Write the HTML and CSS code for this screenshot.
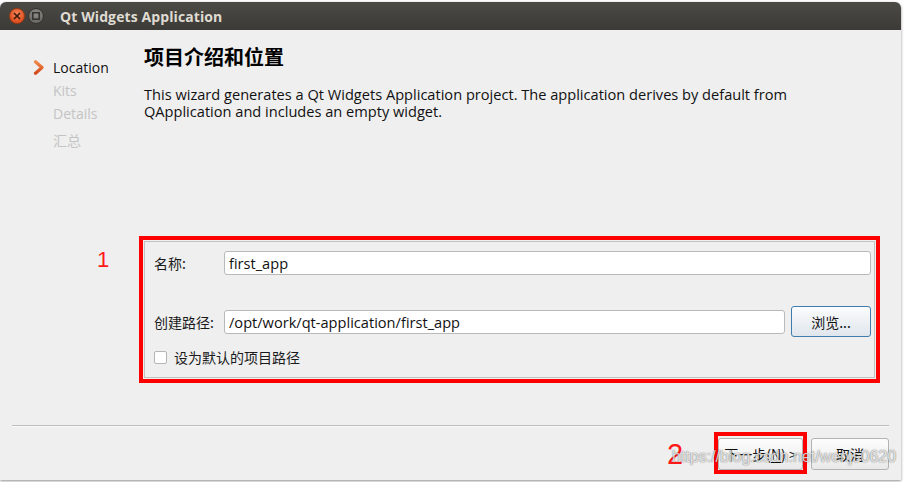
FILE: index.html
```html
<!DOCTYPE html>
<html lang="zh-CN">
<head>
  <meta charset="UTF-8">
  <title>Qt Widgets Application</title>
  <link rel="stylesheet" href="styles.css">
</head>
<body>
  <div class="window">
    <div class="titlebar">
      <span class="wbtn close-btn">
        <svg width="8" height="8" viewBox="0 0 8 8"><path d="M1 1 L7 7 M7 1 L1 7" stroke="#3a1a0c" stroke-width="1.6"/></svg>
      </span>
      <span class="wbtn max-btn">
        <svg width="8" height="8" viewBox="0 0 8 8"><rect x="0.8" y="0.8" width="6.4" height="6.4" fill="none" stroke="#2e2d2a" stroke-width="1.4"/></svg>
      </span>
      <span class="title">Qt Widgets Application</span>
    </div>

    <div class="main">
      <ul class="steps">
        <li class="active">
          <svg class="step-arrow" width="12" height="15" viewBox="0 0 12 15">
            <defs>
              <linearGradient id="ag" x1="0" y1="0" x2="0" y2="1">
                <stop offset="0" stop-color="#f08a4a"/>
                <stop offset="1" stop-color="#d4481a"/>
              </linearGradient>
            </defs>
            <path d="M2.5 1.8 L9 7.5 L2.5 13.2" fill="none" stroke="url(#ag)" stroke-width="3.2" stroke-linecap="round" stroke-linejoin="round"/>
          </svg>
          Location
        </li>
        <li>Kits</li>
        <li>Details</li>
        <li class="cjk">汇总</li>
      </ul>

      <div class="page">
        <h1>项目介绍和位置</h1>
        <p class="desc">This wizard generates a Qt Widgets Application project. The application derives by default from QApplication and includes an empty widget.</p>

        <div class="group marked">
          <span class="mark mark-1">1</span>
          <label class="field-label row-name">名称:</label>
          <div class="input wide row-name">first_app</div>

          <label class="field-label row-path">创建路径:</label>
          <div class="input row-path">/opt/work/qt-application/first_app</div>
          <button class="btn browse-btn row-path">浏览...</button>

          <label class="check-row">
            <span class="checkbox"></span>
            设为默认的项目路径
          </label>
        </div>
      </div>
    </div>

    <div class="footer">
      <span class="mark mark-2">2</span>
      <span class="annot"><button class="btn next-btn">下一步(<u>N</u>) &gt;</button></span>
      <button class="btn">取消</button>
    </div>

    <div class="watermark">https://blog.csdn.net/wenjs0620</div>
  </div>
</body>
</html>
```

FILE: styles.css
```css
* {
  box-sizing: border-box;
  margin: 0;
  padding: 0;
}

body {
  background: #ffffff;
  font-family: 'Open Sans', 'Noto Sans CJK SC', sans-serif;
  font-size: 14px;
  color: #1a1a1a;
  width: 904px;
  height: 482px;
  overflow: hidden;
}

.window {
  position: relative;
  width: 901px;
  height: 478px;
  margin-top: 2px;
  background: #efefef;
  border-radius: 6px 6px 0 0;
  box-shadow: 0 1px 3px rgba(0, 0, 0, 0.45);
  display: flex;
  flex-direction: column;
}

.titlebar {
  height: 28px;
  flex-shrink: 0;
  background: linear-gradient(#4c4a45, #3b3a36);
  border-radius: 6px 6px 0 0;
  display: flex;
  align-items: center;
  padding-left: 9px;
}

.wbtn {
  width: 16px;
  height: 16px;
  border-radius: 50%;
  display: flex;
  align-items: center;
  justify-content: center;
  margin-right: 3px;
}

.close-btn {
  background: radial-gradient(circle at 50% 35%, #f3845a, #e0501f 70%);
  border: 1px solid #9c3a14;
}

.max-btn {
  background: radial-gradient(circle at 50% 35%, #8f8d88, #6b6a65 70%);
  border: 1px solid #353430;
}

.title {
  margin-left: 13px;
  font-family: 'Open Sans', sans-serif;
  font-weight: 700;
  font-size: 14px;
  color: #dfdbd2;
  letter-spacing: 0.1px;
}

.main {
  flex: 1;
  display: flex;
}

.steps {
  list-style: none;
  width: 144px;
  flex-shrink: 0;
  padding: 28px 0 0 53px;
}

.steps li {
  position: relative;
  height: 23px;
  line-height: 20px;
  color: #c4c4c4;
  font-size: 14px;
}

.steps li.active {
  color: #111111;
}

.steps li.cjk {
  margin-top: 4px;
}

.step-arrow {
  position: absolute;
  left: -20px;
  top: 2px;
}

.page {
  flex: 1;
  display: flex;
  flex-direction: column;
  padding: 13px 26px 47px 0;
}

h1 {
  font-family: 'Noto Sans CJK SC', sans-serif;
  font-size: 20px;
  font-weight: 700;
  line-height: 28px;
  color: #000000;
}

.desc {
  margin-top: 15px;
  font-size: 14.6px;
  line-height: 17px;
  color: #111111;
  width: 700px;
}

.group {
  margin-top: auto;
  position: relative;
  height: 137px;
  border: 1px solid #c2c2c2;
  padding: 9px 3px 0 9px;
  display: grid;
  grid-template-columns: 64px 1fr auto;
  grid-template-rows: 24px 31px 31px 11px 18px;
  column-gap: 6px;
  align-items: center;
}

.row-name {
  grid-row: 1;
}

.row-path {
  grid-row: 3;
}

.marked {
  outline: 4px solid #ff0000;
  outline-offset: 1px;
}

.mark {
  position: absolute;
  font-family: 'Liberation Sans', sans-serif;
  color: #ff1a1a;
  line-height: 1;
}

.mark-1 {
  left: -48px;
  top: 7px;
  font-size: 22px;
}

.mark-2 {
  left: 655px;
  top: 14px;
  font-size: 29px;
}

.field-label {
  font-family: 'Noto Sans CJK SC', sans-serif;
  font-size: 14px;
  color: #1a1a1a;
  white-space: nowrap;
}

.input {
  height: 24px;
  background: #ffffff;
  border: 1px solid #b9b9b9;
  border-radius: 3px;
  padding: 0 4px;
  line-height: 22px;
  font-size: 14.6px;
  color: #111111;
}

.input.wide {
  grid-column: 2 / 4;
}

.btn {
  height: 32px;
  background: linear-gradient(#fdfdfd, #e9e9e9);
  border: 1px solid #b3b3b3;
  border-radius: 3px;
  font-family: 'Noto Sans CJK SC', sans-serif;
  font-size: 14px;
  color: #111111;
}

.browse-btn {
  width: 80px;
  height: 31px;
  background: linear-gradient(#fbfcfd, #dfe6ec);
  border-color: #3f7bab;
}

.check-row {
  grid-row: 5;
  grid-column: 1 / 4;
  display: flex;
  align-items: center;
  gap: 7px;
  font-family: 'Noto Sans CJK SC', sans-serif;
  font-size: 14px;
}

.checkbox {
  width: 13px;
  height: 13px;
  background: #ffffff;
  border: 1px solid #b5b5b5;
  border-radius: 2px;
}

.footer {
  position: relative;
  height: 55px;
  flex-shrink: 0;
  margin: 0 12px;
  border-top: 1px solid #bdbdbd;
  box-shadow: inset 0 1px 0 #fafafa;
  display: flex;
  justify-content: flex-end;
  align-items: flex-start;
  gap: 8px;
  padding-top: 12px;
}

.footer .btn {
  width: 78px;
}

.annot {
  display: flex;
  border: 4px solid #ff0000;
  padding-top: 2px;
  margin: -6px -4px 0 -4px;
}

.footer .next-btn {
  width: 85px;
}

.next-btn u {
  text-underline-offset: 2px;
}

.watermark {
  position: absolute;
  left: 672px;
  top: 446px;
  font-family: 'Liberation Sans', sans-serif;
  font-size: 16px;
  color: rgba(255, 255, 255, 0.8);
  text-shadow: 0 0 1px rgba(0, 0, 0, 0.5), 0 0 2px rgba(0, 0, 0, 0.25);
  pointer-events: none;
}
```
